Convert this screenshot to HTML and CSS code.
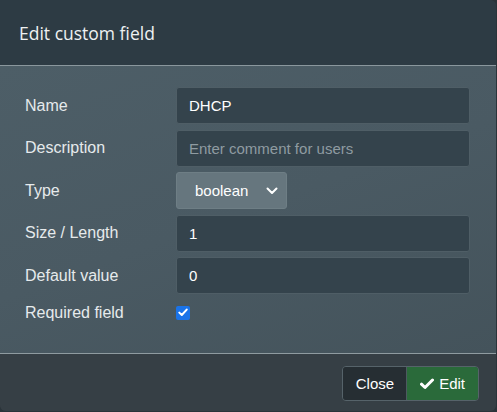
FILE: index.html
```html
<!DOCTYPE html>
<html>
<head>
<meta charset="utf-8">
<link rel="stylesheet" href="styles.css">
</head>
<body>
<div class="modal">
  <div class="modal-header">
    <h4 class="modal-title">Edit custom field</h4>
  </div>
  <div class="modal-body">
    <div class="row">
      <label class="lbl">Name</label>
      <div class="ctl"><input class="input" type="text" value="DHCP"></div>
    </div>
    <div class="row">
      <label class="lbl">Description</label>
      <div class="ctl"><input class="input" type="text" placeholder="Enter comment for users"></div>
    </div>
    <div class="row">
      <label class="lbl">Type</label>
      <div class="ctl">
        <div class="select">
          <span>boolean</span>
          <svg class="chev" width="12" height="8" viewBox="0 0 12 8"><path d="M1.5 1.5 L6 6 L10.5 1.5" fill="none" stroke="#fff" stroke-width="2" stroke-linecap="round" stroke-linejoin="round"/></svg>
        </div>
      </div>
    </div>
    <div class="row">
      <label class="lbl">Size / Length</label>
      <div class="ctl"><input class="input" type="text" value="1"></div>
    </div>
    <div class="row">
      <label class="lbl">Default value</label>
      <div class="ctl"><input class="input" type="text" value="0"></div>
    </div>
    <div class="row row-check">
      <label class="lbl">Required field</label>
      <div class="ctl">
        <span class="check">
          <svg width="10" height="9" viewBox="0 0 10 9"><path d="M1.3 4.6 L3.8 7 L8.7 1.6" fill="none" stroke="#fff" stroke-width="2" stroke-linecap="round" stroke-linejoin="round"/></svg>
        </span>
      </div>
    </div>
  </div>
  <div class="modal-footer">
    <div class="btn-group">
      <button class="btn btn-close">Close</button>
      <button class="btn btn-edit">
        <svg width="14" height="12" viewBox="0 0 14 12"><path d="M1.5 6.2 L5 9.5 L12.5 2" fill="none" stroke="#fff" stroke-width="3" stroke-linecap="round" stroke-linejoin="round"/></svg>
        Edit
      </button>
    </div>
  </div>
</div>
</body>
</html>
```

FILE: styles.css
```css
html, body {
  margin: 0;
  padding: 0;
  background: #2a343a;
  height: 100%;
}
body {
  font-family: "Liberation Sans", Arial, sans-serif;
  color: #e8ecee;
}
.modal {
  width: 496px;
  height: 411px;
  border-radius: 0 6px 6px 6px;
  overflow: hidden;
  display: flex;
  flex-direction: column;
  background: #363f45;
}
.modal-header {
  flex: none;
  height: 66px;
  box-sizing: border-box;
  background: #2d3b44;
  border-bottom: 1px solid #8a979d;
  display: flex;
  align-items: center;
  padding: 1px 0 0 19px;
}
.modal-title {
  margin: 0;
  font-family: "Open Sans", sans-serif;
  font-weight: 400;
  font-size: 17.5px;
  color: #eef1f2;
}
.modal-body {
  flex: none;
  height: 288px;
  box-sizing: border-box;
  border-bottom: 1px solid #8f9ba0;
  background: linear-gradient(160deg, #4d5e67 0%, #4a5a63 50%, #44535b 100%);
  padding: 21px 26px 0 25px;
  display: flex;
  flex-direction: column;
  gap: 5.5px;
}
.row {
  display: flex;
  align-items: center;
  height: 37px;
}
.lbl {
  width: 151px;
  flex: none;
  font-size: 16px;
  color: #e6eaec;
}
.ctl {
  flex: 1;
  display: flex;
}
.input {
  width: 100%;
  height: 37px;
  box-sizing: border-box;
  background: #34434c;
  border: 1px solid #4f5e66;
  border-radius: 3px;
  padding: 0 12px;
  font-family: "Liberation Sans", Arial, sans-serif;
  font-size: 15px;
  color: #ffffff;
  outline: none;
}
.input::placeholder {
  color: #8f9ba1;
}
.select {
  width: 111px;
  height: 37px;
  box-sizing: border-box;
  background: #66767e;
  border: 1px solid #6e7e85;
  border-radius: 3px;
  display: flex;
  align-items: center;
  justify-content: space-between;
  padding: 0 8px 0 18px;
  font-size: 15px;
  color: #ffffff;
}
.row-check {
  height: 26px;
}
.check {
  width: 14px;
  height: 14px;
  border-radius: 2px;
  background: #1a73e8;
  display: flex;
  align-items: center;
  justify-content: center;
}
.modal-footer {
  flex: 1;
  background: #363f45;
  display: flex;
  justify-content: flex-end;
  align-items: flex-start;
  padding: 12px 17px 0 0;
}
.btn-group {
  display: flex;
  border: 1px solid #56636a;
  border-radius: 4px;
  overflow: hidden;
}
.btn {
  height: 33px;
  border: none;
  font-family: "Liberation Sans", Arial, sans-serif;
  font-size: 15px;
  color: #ffffff;
  display: flex;
  align-items: center;
  gap: 5px;
  margin: 0;
}
.btn-close {
  background: #262e33;
  padding: 0 12px 0 13px;
  border-right: 1px solid #4d5a60;
}
.btn-edit {
  background: #2a6a3a;
  padding: 0 13px;
}
```
